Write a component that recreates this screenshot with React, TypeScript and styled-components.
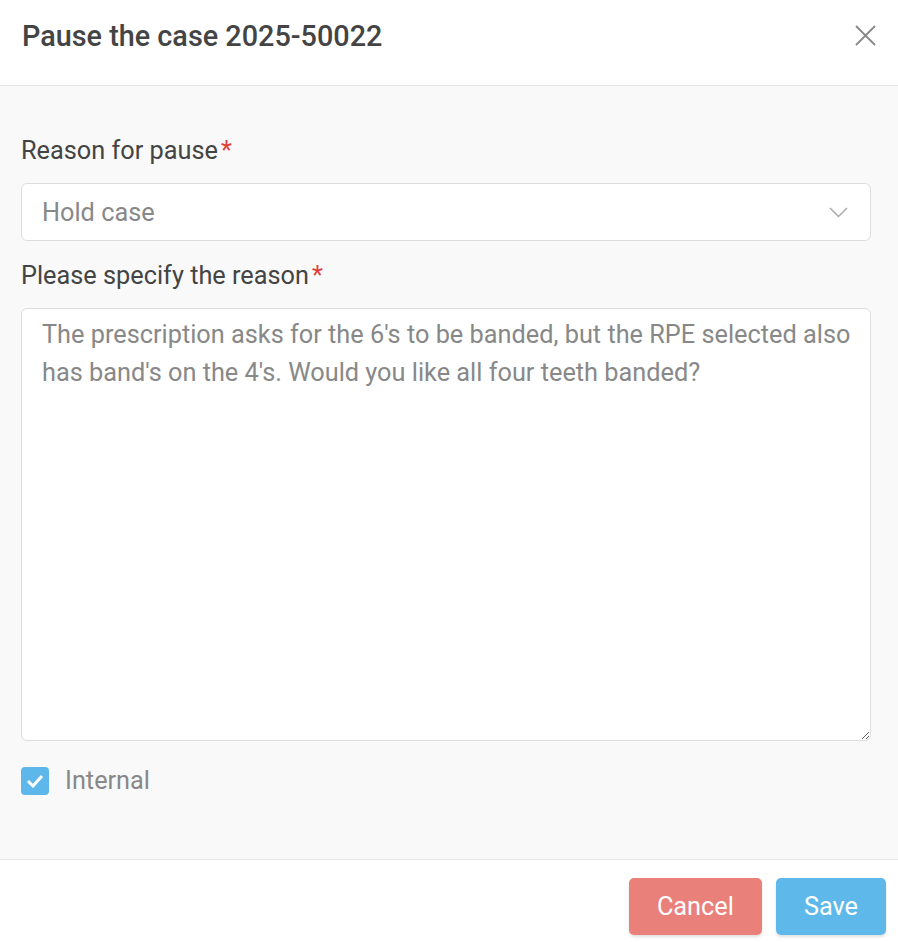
import styled, { createGlobalStyle } from "styled-components";

const GlobalStyle = createGlobalStyle`
  html, body {
    margin: 0;
    padding: 0;
    background: #ffffff;
    font-family: Roboto, "Liberation Sans", sans-serif;
  }
  * { box-sizing: border-box; }
`;

const Modal = styled.div`
  width: 898px;
  height: 942px;
  display: flex;
  flex-direction: column;
  background: #ffffff;
`;

const Header = styled.div`
  height: 86px;
  display: flex;
  align-items: center;
  justify-content: space-between;
  padding: 0 22px 14px 22px;
  border-bottom: 1px solid #e6e6e6;
`;

const Title = styled.h2`
  margin: 0;
  font-size: 28.8px;
  font-weight: 500;
  color: #444444;
`;

const CloseButton = styled.button`
  border: none;
  background: none;
  padding: 0;
  width: 22px;
  height: 22px;
  display: flex;
  align-items: center;
  justify-content: center;
  cursor: pointer;
`;

const Body = styled.div`
  height: 774px;
  background: #f9f9f9;
  padding: 48px 27px 0 21px;
  border-bottom: 1px solid #e6e6e6;
`;

const Label = styled.div`
  font-size: 25.3px;
  color: #444444;
  line-height: 34px;
  margin-bottom: 15px;
`;

const Required = styled.span`
  color: #e0403a;
  margin-left: 3px;
`;

const Select = styled.div`
  height: 58px;
  background: #ffffff;
  border: 1px solid #dddddd;
  border-radius: 6px;
  display: flex;
  align-items: center;
  justify-content: space-between;
  padding: 0 22px 0 20px;
  font-size: 25.3px;
  color: #888888;
  margin-bottom: 18px;
`;

const TextArea = styled.textarea`
  display: block;
  width: 100%;
  height: 433px;
  background: #ffffff;
  border: 1px solid #dddddd;
  border-radius: 6px;
  padding: 7px 12px 7px 20px;
  font-family: Roboto, "Liberation Sans", sans-serif;
  font-size: 25.3px;
  line-height: 38px;
  color: #888888;
  resize: vertical;
  outline: none;
`;

const CheckRow = styled.label`
  display: flex;
  align-items: center;
  gap: 16px;
  margin-top: 23px;
  font-size: 25.3px;
  line-height: 34px;
  color: #888888;
`;

const CheckBox = styled.span`
  width: 28px;
  height: 28px;
  border-radius: 4px;
  background: #5db7ea;
  display: flex;
  align-items: center;
  justify-content: center;
`;

const Footer = styled.div`
  flex: 1;
  display: flex;
  justify-content: flex-end;
  align-items: flex-start;
  gap: 14px;
  padding: 18px 12px 0 0;
`;

const Button = styled.button<{ $variant: "cancel" | "save" }>`
  height: 57px;
  padding: 0 28px;
  border: none;
  border-radius: 5px;
  font-family: Roboto, "Liberation Sans", sans-serif;
  font-size: 25.3px;
  color: #ffffff;
  background: ${(p) => (p.$variant === "cancel" ? "#e98079" : "#5fb8ea")};
  box-shadow: 0 2px 3px rgba(0, 0, 0, 0.12);
  cursor: pointer;
`;

export default function App() {
  return (
    <>
      <GlobalStyle />
      <Modal>
        <Header>
          <Title>Pause the case 2025-50022</Title>
          <CloseButton aria-label="Close">
            <svg width="21" height="21" viewBox="0 0 21 21">
              <path d="M1 1 L20 20 M20 1 L1 20" stroke="#888888" strokeWidth="1.8" />
            </svg>
          </CloseButton>
        </Header>
        <Body>
          <Label>
            Reason for pause<Required>*</Required>
          </Label>
          <Select>
            <span>Hold case</span>
            <svg width="19" height="11" viewBox="0 0 19 11">
              <path d="M1 1 L9.5 9.5 L18 1" stroke="#aaaaaa" strokeWidth="1.5" fill="none" />
            </svg>
          </Select>
          <Label>
            Please specify the reason<Required>*</Required>
          </Label>
          <TextArea
            readOnly
            defaultValue="The prescription asks for the 6's to be banded, but the RPE selected also has band's on the 4's. Would you like all four teeth banded?"
          />
          <CheckRow>
            <CheckBox>
              <svg width="18" height="14" viewBox="0 0 18 14">
                <path d="M2 7 L7 12 L16 2" stroke="#ffffff" strokeWidth="3" fill="none" />
              </svg>
            </CheckBox>
            Internal
          </CheckRow>
        </Body>
        <Footer>
          <Button $variant="cancel">Cancel</Button>
          <Button $variant="save">Save</Button>
        </Footer>
      </Modal>
    </>
  );
}
